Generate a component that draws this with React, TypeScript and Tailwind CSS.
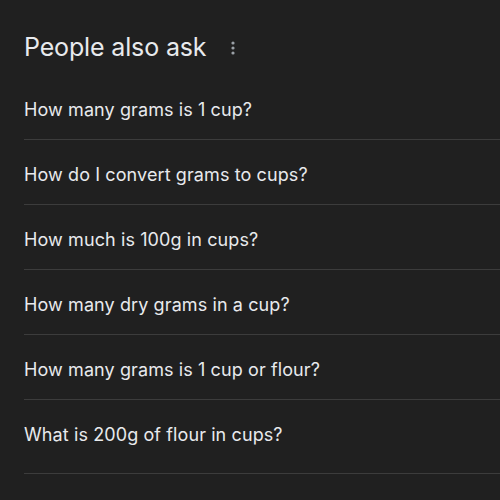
const QUESTIONS = [
  "How many grams is 1 cup?",
  "How do I convert grams to cups?",
  "How much is 100g in cups?",
  "How many dry grams in a cup?",
  "How many grams is 1 cup or flour?",
  "What is 200g of flour in cups?",
];

export default function App() {
  return (
    <div
      className="w-[500px] h-[500px] overflow-hidden bg-[#202020] text-[#e8eaed]"
      style={{ fontFamily: "Inter, 'Noto Sans', sans-serif" }}
    >
      {/* Header */}
      <div className="h-[75px] pl-6 pt-5 flex items-center gap-[25px]">
        <h2 className="text-[25px] leading-none tracking-[-0.15px]">People also ask</h2>
        <svg width="4" height="14" viewBox="0 0 4 14" className="mt-[1px]">
          <circle cx="2" cy="2" r="1.6" fill="#9aa0a6" />
          <circle cx="2" cy="7" r="1.6" fill="#9aa0a6" />
          <circle cx="2" cy="12" r="1.6" fill="#9aa0a6" />
        </svg>
      </div>

      {/* Questions */}
      <div className="ml-6">
        {QUESTIONS.map((q, i) => (
          <div
            key={q}
            className={`border-b border-[#3c3c3c] flex items-start ${
              i === QUESTIONS.length - 1 ? "h-[74px]" : "h-[65px]"
            }`}
          >
            <p className="text-[18px] leading-[65px] tracking-[0.1px] mt-[2px]">{q}</p>
          </div>
        ))}
      </div>
    </div>
  );
}
